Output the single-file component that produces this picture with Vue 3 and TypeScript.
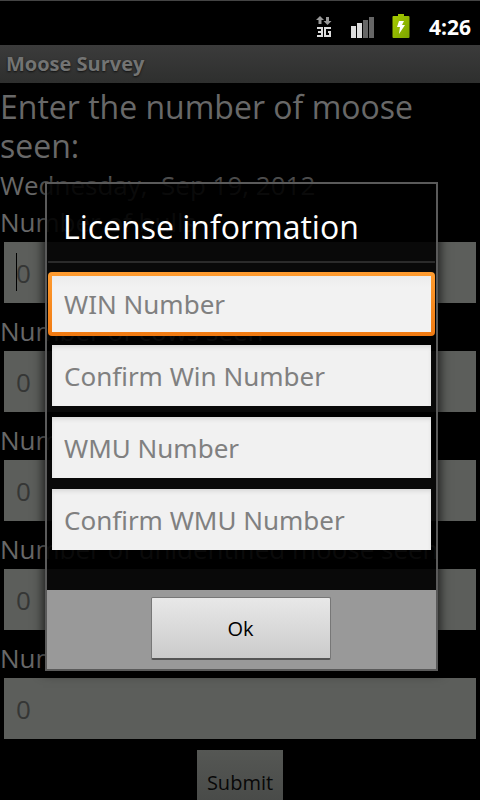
<script setup lang="ts">
import { ref } from 'vue'

interface Field {
  id: string
  label: string
}

const counts: Field[] = [
  { id: 'bulls', label: 'Number of bulls' },
  { id: 'cows', label: 'Number of cows seen' },
  { id: 'calves', label: 'Number of calves' },
  { id: 'unidentified', label: 'Number of unidentified moose seen' },
  { id: 'hours', label: 'Number of hours' },
]
const licence: Field[] = [
  { id: 'win', label: 'WIN Number' },
  { id: 'win2', label: 'Confirm Win Number' },
  { id: 'wmu', label: 'WMU Number' },
  { id: 'wmu2', label: 'Confirm WMU Number' },
]
const values = ref<string[]>(licence.map(() => ''))
</script>

<template>
  <div class="screen">
    <header class="status">
      <svg class="net" width="16" height="24" viewBox="0 0 16 24">
        <path fill="#999" d="M4 1l4 4H5.500v4h-3V5H0zM11.500 10l-4-4H10V2h3v4h2.500z" />
        <path fill="none" stroke="#ddd" stroke-width="2" d="M1 13h5v8H1M2 17h4M15 13H9v8h5v-4h-2" />
      </svg>
      <svg class="signal" width="24" height="22" viewBox="0 0 24 22">
        <path fill="#ddd" d="M0 10h5v12H0zM6 7h5v15H6z" />
        <path fill="#666" d="M12 4h5v18h-5zM18 1h5v21h-5z" />
      </svg>
      <svg class="battery" width="18" height="25" viewBox="0 0 18 25">
        <defs>
          <linearGradient id="charge" x1="0" y1="0" x2="1" y2="1">
            <stop offset="0" stop-color="#a8cc00" />
            <stop offset="1" stop-color="#7ba300" />
          </linearGradient>
        </defs>
        <path fill="url(#charge)" d="M6 0h6v2h4.500q1 0 1 1v20q0 1-1 1h-15q-1 0-1-1V3q0-1 1-1H6z" />
        <path fill="#fff" d="M7 7h5l-2 4h3L7 20l1-7H5z" />
      </svg>
      <time class="clock">4:26</time>
    </header>

    <main class="survey">
      <h1 class="app-title">Moose Survey</h1>
      <h2 class="question">Enter the number of moose seen:</h2>
      <p class="date">Wednesday,&nbsp; Sep 19, 2012</p>
      <div v-for="(f, i) in counts" :key="f.id" class="count">
        <label :for="f.id">{{ f.label }}</label>
        <div class="entry" :class="{ caret: i === 0 }">
          <input :id="f.id" type="text" placeholder="0" />
        </div>
      </div>
      <button type="button" class="submit">Submit</button>
    </main>

    <div class="overlay">
      <section class="dialog" role="dialog" aria-labelledby="dialog-title">
        <h2 id="dialog-title" class="dialog-title">License information</h2>
        <form class="fields">
          <input
            v-for="(f, i) in licence"
            :key="f.id"
            v-model="values[i]"
            type="text"
            :aria-label="f.label"
            :placeholder="f.label"
            :class="{ active: i === 0 }"
          />
        </form>
        <footer class="actions">
          <button type="button" class="ok">Ok</button>
        </footer>
      </section>
    </div>
  </div>
</template>

<style>
body {
  margin: 0;
  background: #000;
}
</style>

<style scoped>
* {
  box-sizing: border-box;
}
.screen {
  position: relative;
  height: 100vh;
  min-height: 700px;
  overflow: hidden;
  background: #000;
  color: #686868;
  font-family: "Open Sans", "Noto Sans", sans-serif;
  font-size: 26px;
}
h1,
h2,
p {
  margin: 0;
  font-weight: 400;
}
input,
button {
  font-family: inherit;
  border: 0;
  border-radius: 0;
  outline: 0;
}
.status {
  display: flex;
  align-items: center;
  justify-content: flex-end;
  height: 45px;
  padding: 7px 9px 0 0;
  border-top: 1px solid #444;
}
.net {
  margin-right: 19px;
}
.signal {
  margin-right: 17px;
}
.battery {
  margin-right: 19px;
}
.clock {
  color: #fff;
  font-size: 21px;
  font-weight: 700;
  line-height: 28px;
}
.app-title {
  height: 38px;
  padding-left: 6px;
  background: linear-gradient(#3b3b3b, #2e2f2e);
  color: #737473;
  font-size: 20px;
  font-weight: 700;
  line-height: 37px;
  text-shadow: 0 1px 2px #111;
}
.question {
  padding-top: 4px;
  font-size: 32px;
  line-height: 39px;
}
.date {
  height: 37px;
  line-height: 40px;
}
.count label {
  display: block;
  height: 37px;
  line-height: 40px;
  white-space: nowrap;
}
.entry {
  position: relative;
  padding: 3px 4px 8px;
}
.entry input {
  display: block;
  width: 100%;
  height: 61px;
  padding: 0 12px;
  background: #5c5e5b;
  color: #333;
  font-size: 26px;
}
.entry input::placeholder {
  color: #353635;
  opacity: 1;
}
.caret::before {
  content: "";
  position: absolute;
  top: 14px;
  left: 16px;
  width: 1px;
  height: 38px;
  background: #000;
}
.submit {
  display: block;
  height: 64px;
  margin: 3px auto 0;
  padding: 0 10px;
  background: linear-gradient(#555754, #464846);
  color: #080808;
  font-size: 20px;
}
.overlay {
  position: absolute;
  inset: 45px 0 0;
  display: flex;
  align-items: center;
  justify-content: center;
  padding: 8px 42px 0 45px;
}
.dialog {
  width: 100%;
  border: 2px solid #5a5a5a;
  background: rgba(0, 0, 0, 0.9);
  box-shadow: 0 0 10px 2px rgba(0, 0, 0, 0.7);
}
.dialog-title {
  margin: 0 1px;
  padding: 20px 15px 12px;
  border-bottom: 2px solid #2b2b2b;
  color: #fff;
  font-size: 32px;
  line-height: 45px;
}
.fields {
  display: flex;
  flex-direction: column;
  gap: 11px;
  padding: 10px 5px 40px;
  font-family: "Noto Sans", "Open Sans", sans-serif;
}
.fields input {
  width: 100%;
  height: 61px;
  padding: 0 12px;
  background: #f1f1f1;
  color: #000;
  font-size: 26px;
  box-shadow: inset 0 3px 4px -1px #d6d6d6;
}
.fields input::placeholder {
  color: #808080;
  opacity: 1;
}
.fields .active {
  width: auto;
  height: 64px;
  margin: -1px -4px -2px;
  border: 4px solid transparent;
  border-radius: 4px;
  background:
    linear-gradient(#ececec, #f2f2f2 12px) padding-box,
    linear-gradient(#ff9c30, #f07a12) border-box;
  box-shadow: none;
}
.actions {
  display: flex;
  justify-content: center;
  padding: 7px 2px 9px 0;
  background: #999;
}
.ok {
  width: 180px;
  height: 63px;
  border: 1px solid #777;
  border-bottom: 2px solid #555;
  border-radius: 2px;
  background: linear-gradient(#e8e8e8, #cbcbcb);
  color: #000;
  font-size: 20px;
}
</style>
